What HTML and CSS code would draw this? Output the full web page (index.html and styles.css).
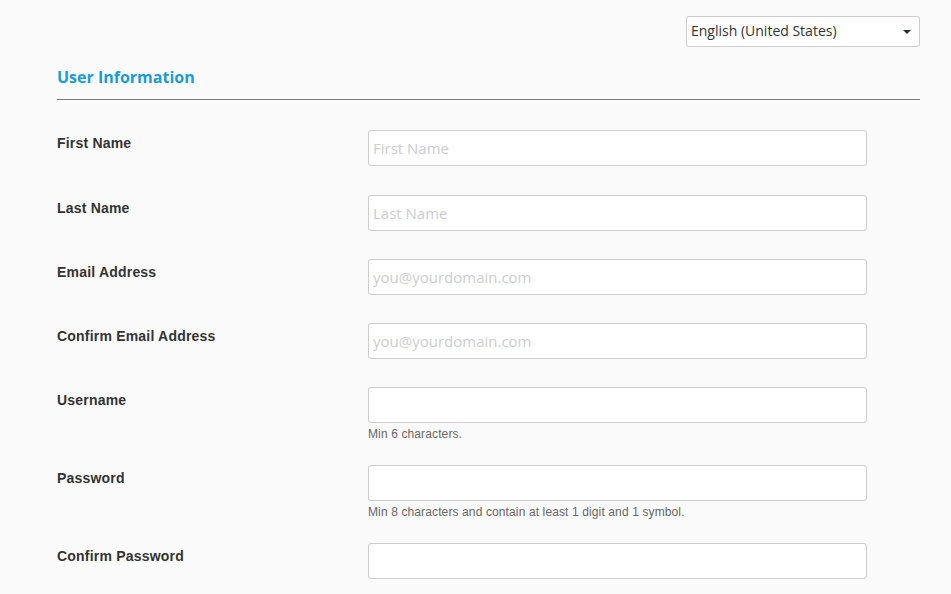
FILE: index.html
```
<!DOCTYPE html>
<html>
<head>
<meta charset="utf-8">
<link rel="stylesheet" href="styles.css">
</head>
<body>
<div class="page">
  <div class="topbar">
    <div class="lang-select">
      <span class="lang-text">English (United States)</span>
      <span class="caret"></span>
    </div>
  </div>
  <h2 class="section-title">User Information</h2>
  <div class="form">
    <div class="row">
      <label class="label">First Name</label>
      <div class="field"><input class="input" type="text" placeholder="First Name"></div>
    </div>
    <div class="row">
      <label class="label">Last Name</label>
      <div class="field"><input class="input" type="text" placeholder="Last Name"></div>
    </div>
    <div class="row">
      <label class="label">Email Address</label>
      <div class="field"><input class="input" type="text" placeholder="you@yourdomain.com"></div>
    </div>
    <div class="row">
      <label class="label">Confirm Email Address</label>
      <div class="field"><input class="input" type="text" placeholder="you@yourdomain.com"></div>
    </div>
    <div class="row">
      <label class="label">Username</label>
      <div class="field"><input class="input" type="text"><div class="help">Min 6 characters.</div></div>
    </div>
    <div class="row">
      <label class="label">Password</label>
      <div class="field"><input class="input" type="password"><div class="help">Min 8 characters and contain at least 1 digit and 1 symbol.</div></div>
    </div>
    <div class="row">
      <label class="label">Confirm Password</label>
      <div class="field"><input class="input" type="password"></div>
    </div>
  </div>
</div>
</body>
</html>
```
FILE: styles.css
```
html, body {
  margin: 0;
  padding: 0;
  background: #fafafa;
}
.page {
  padding: 16px 31px 0 57px;
  font-family: "Liberation Sans", Arial, sans-serif;
  color: #333;
}
.topbar {
  display: flex;
  justify-content: flex-end;
}
.lang-select {
  height: 29px;
  border: 1px solid #ccc;
  border-radius: 3px;
  background: #fff;
  display: flex;
  align-items: center;
  justify-content: space-between;
  padding: 0 6px 0 4px;
  box-sizing: content-box;
  width: 222px;
}
.lang-text {
  font-family: "Open Sans", sans-serif;
  font-size: 14px;
  color: #333;
  position: relative;
  top: -1px;
}
.caret {
  width: 0;
  height: 0;
  border-left: 4px solid transparent;
  border-right: 4px solid transparent;
  border-top: 4px solid #1f2d4d;
  margin-right: 2px;
}
.section-title {
  margin: 19px 0 0 0;
  padding-bottom: 11px;
  border-bottom: 1px solid #7a7a7a;
  font-family: "Open Sans", sans-serif;
  font-weight: 700;
  font-size: 16px;
  line-height: 22px;
  color: #1a9bd7;
}
.form {
  padding-top: 30px;
}
.row {
  display: flex;
  margin-bottom: 28px;
}
.row:first-child {
  margin-bottom: 29px;
}
.label {
  width: 311px;
  flex: none;
  font-weight: 700;
  font-size: 14px;
  line-height: 16px;
  letter-spacing: 0.2px;
  padding-top: 5px;
  color: #333;
}
.field {
  width: 499px;
}
.input {
  display: block;
  width: 499px;
  height: 36px;
  box-sizing: border-box;
  border: 1px solid #ccc;
  border-radius: 3px;
  background: #fff;
  margin: 0;
  padding: 0 4px;
  font-family: "Open Sans", sans-serif;
  font-size: 15px;
  color: #333;
  outline: none;
}
.input::placeholder {
  color: #cdcdcd;
}
.help {
  font-size: 12px;
  line-height: 14px;
  letter-spacing: 0.12px;
  margin-top: 4px;
  margin-bottom: -4px;
  color: #666;
}
```
